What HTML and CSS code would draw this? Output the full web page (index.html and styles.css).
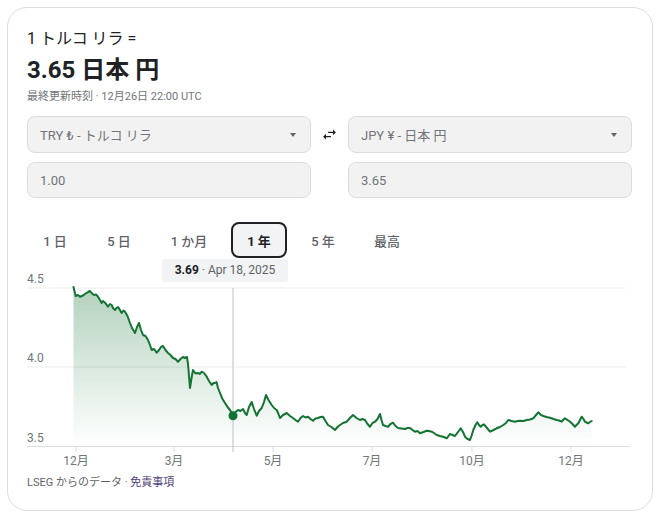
FILE: index.html
```html
<!DOCTYPE html>
<html lang="ja">
<head>
<meta charset="utf-8">
<link rel="stylesheet" href="styles.css">
</head>
<body>
<div class="card">
  <div class="title">1 トルコ リラ =</div>
  <div class="value">3.65 日本 円</div>
  <div class="updated">最終更新時刻 · 12月26日 22:00 UTC</div>

  <div class="converter">
    <div class="select"><span>TRY ₺ - トルコ リラ</span><span class="caret"></span></div>
    <div class="swap">
      <svg width="17" height="17" viewBox="0 0 24 24"><path d="M6.99 11L3 15l3.99 4v-3H14v-2H6.99v-3zM21 9l-3.99-4v3H10v2h7.01v3L21 9z" fill="#202124"/></svg>
    </div>
    <div class="select"><span>JPY ¥ - 日本 円</span><span class="caret"></span></div>
    <div class="input">1.00</div>
    <div></div>
    <div class="input">3.65</div>
  </div>

  <div class="tabs">
    <div class="tab">1 日</div>
    <div class="tab">5 日</div>
    <div class="tab wide">1 か月</div>
    <div class="tab active">1 年</div>
    <div class="tab">5 年</div>
    <div class="tab">最高</div>
  </div>

  <div class="chart">
    <div class="tooltip"><b>3.69</b> · Apr 18, 2025</div>
    <svg class="plot" width="605" height="200" viewBox="27 268 605 200">
      <defs>
        <linearGradient id="g" x1="0" y1="288" x2="0" y2="446" gradientUnits="userSpaceOnUse">
          <stop offset="0" stop-color="#137333" stop-opacity="0.32"/>
          <stop offset="1" stop-color="#137333" stop-opacity="0"/>
        </linearGradient>
      </defs>
      <line x1="27" y1="288" x2="625" y2="288" stroke="#ebebeb"/>
      <line x1="27" y1="367" x2="625" y2="367" stroke="#ebebeb"/>
      <line x1="27" y1="446.5" x2="630" y2="446.5" stroke="#dadce0"/>
      <g stroke="#dadce0">
        <line x1="76" y1="446" x2="76" y2="452"/>
        <line x1="174" y1="446" x2="174" y2="452"/>
        <line x1="273" y1="446" x2="273" y2="452"/>
        <line x1="372" y1="446" x2="372" y2="452"/>
        <line x1="472" y1="446" x2="472" y2="452"/>
        <line x1="571" y1="446" x2="571" y2="452"/>
      </g>
      <g class="ylab">
        <text x="27" y="282.5">4.5</text>
        <text x="27" y="361.5">4.0</text>
        <text x="27" y="441.5">3.5</text>
      </g>
      <path fill="url(#g)" d="M73.5,287 L75.7,296 L80,296.7 L85,294 L90,291 L94,295 L98,296.7 L101.7,303 L105,302.7 L108,306.7 L111.7,305 L115,310 L118,307 L121.7,313 L125,311.7 L130,323 L135,333 L139,323 L143,335 L148,340 L151.7,350 L156.7,352.7 L163,346 L168,353 L173,358 L178,361.7 L183,357 L187,357 L188,364 L190,388 L193,370 L198,373 L201.7,371.7 L206.7,376.7 L211.7,385 L215,383 L218,388 L220,393 L225,403 L230,410 L233,415.7 L238,410 L243,409 L246.7,415 L251.7,402 L256.7,415.7 L261.7,408 L266,395 L271.7,405 L276.7,410 L280,418 L286.7,413 L293,418 L298,421.7 L303,416 L308,416.7 L313,420.7 L318,418 L323,416.7 L328,425 L335,430 L340,425 L346.7,421.7 L353,415 L360,420 L365,420 L370,426.7 L375,421.7 L380,414 L383,425 L388,426.7 L393,422.7 L398,428 L405,429 L410,428 L415,431.7 L420,433.3 L426.7,430.7 L431.7,431.7 L436.7,435 L443,436.7 L446.7,438.3 L450,434 L455,436 L460.7,428.3 L465,436.7 L470,440 L473.3,430 L477.3,422.3 L480.7,426.7 L484,424.3 L490,431.7 L496.7,428.3 L503.3,425 L508.3,420 L515,421.7 L520,420.7 L526.7,420 L533.3,418.3 L538.3,412.3 L543.3,416 L550,417.7 L556.7,420 L561.7,421.7 L565,418.3 L570,421.7 L575,426.7 L578.3,423.3 L581.7,416.7 L585,421.7 L588.3,423.3 L591.7,421 L591.7,446 L73.5,446 Z"/>
      <line x1="233" y1="288" x2="233" y2="452" stroke="#bdc1c6"/>
      <path fill="none" stroke="#137333" stroke-width="2" stroke-linejoin="round" stroke-linecap="round" d="M73.5,287 L75.7,296 L78,295 L80,296.7 L83,295.5 L85,294 L88,292 L90,291 L92,293.5 L94,295 L96,294.5 L98,296.7 L100,300 L101.7,303 L103,301 L105,302.7 L106.5,304.5 L108,306.7 L110,304 L111.7,305 L113,308 L115,310 L116.5,308 L118,307 L120,310 L121.7,313 L123.5,310.5 L125,311.7 L127.5,316 L130,323 L132,328 L135,333 L137,327 L139,323 L141,330 L143,335 L145.5,336 L148,340 L150,345 L151.7,350 L154,349 L156.7,352.7 L159,350 L161,347 L163,346 L165.5,350 L168,353 L170.5,355 L173,358 L175.5,359 L178,361.7 L180.5,359 L183,357 L185,358 L187,357 L188,364 L190,388 L191.5,378 L193,370 L195.5,373.5 L198,373 L200,374 L201.7,371.7 L204,373 L206.7,376.7 L209,381 L211.7,385 L213.5,383 L215,383 L216.5,382 L218,388 L220,393 L222.5,399 L225,403 L227.5,407 L230,410 L233,415.7 L235.5,412 L238,410 L240.5,411 L243,409 L245,413 L246.7,415 L249,407 L251.7,402 L254,409 L256.7,415.7 L259,411 L261.7,408 L264,402 L266,395 L268.5,400 L271.7,405 L274,408 L276.7,410 L278.5,414 L280,418 L283,415 L286.7,413 L290,416 L293,418 L295.5,420 L298,421.7 L300.5,418 L303,416 L305.5,417.5 L308,416.7 L310.5,419 L313,420.7 L315.5,418.5 L318,418 L320.5,417 L323,416.7 L325.5,421 L328,425 L331.5,427 L335,430 L337.5,427 L340,425 L343,423 L346.7,421.7 L350,418 L353,415 L356.5,418 L360,420 L362.5,419 L365,420 L367.5,424 L370,426.7 L372.5,423 L375,421.7 L377.5,419 L380,414 L381.5,420 L383,425 L385.5,426 L388,426.7 L390.5,424 L393,422.7 L395.5,426 L398,428 L401.5,428.5 L405,429 L407.5,428 L410,428 L412.5,430 L415,431.7 L417.5,431 L420,433.3 L423.5,432 L426.7,430.7 L429,431 L431.7,431.7 L434,433 L436.7,435 L440,436 L443,436.7 L445,437.5 L446.7,438.3 L448.5,436 L450,434 L452.5,435 L455,436 L458,432 L460.7,428.3 L463,432 L465,436.7 L467.5,439 L470,440 L471.5,436 L473.3,430 L475.5,425 L477.3,422.3 L479,425 L480.7,426.7 L482.5,425 L484,424.3 L487,428 L490,431.7 L493.5,430 L496.7,428.3 L500,427 L503.3,425 L506,423 L508.3,420 L511.5,421 L515,421.7 L517.5,421 L520,420.7 L523.5,421 L526.7,420 L530,419.5 L533.3,418.3 L536,415 L538.3,412.3 L541,415 L543.3,416 L546.5,417 L550,417.7 L553.5,419 L556.7,420 L559,420.5 L561.7,421.7 L563.5,419.5 L565,418.3 L567.5,420 L570,421.7 L572.5,424 L575,426.7 L576.5,425 L578.3,423.3 L580,420 L581.7,416.7 L583.5,419 L585,421.7 L586.5,422.5 L588.3,423.3 L590,422 L591.7,421"/>
      <circle cx="233" cy="415.7" r="4.5" fill="#137333"/>
      <g class="xlab">
        <text x="76" y="464.5">12月</text>
        <text x="174" y="464.5">3月</text>
        <text x="273" y="464.5">5月</text>
        <text x="372" y="464.5">7月</text>
        <text x="472" y="464.5">10月</text>
        <text x="571" y="464.5">12月</text>
      </g>
    </svg>
  </div>

  <div class="footer">LSEG からのデータ · <span class="link">免責事項</span></div>
</div>
</body>
</html>
```
FILE: styles.css
```css
* { box-sizing: border-box; }
html, body { margin: 0; padding: 0; background: #fff; }
body {
  font-family: Roboto, "Noto Sans CJK JP", sans-serif;
  color: #202124;
}
.card {
  margin: 7px;
  width: 646px;
  height: 504px;
  border: 1px solid #dadce0;
  border-radius: 20px;
  padding: 20px 20px 0 19px;
}
.title {
  font-size: 16px;
  line-height: 22px;
  color: #202124;
}
.value {
  margin-top: 4px;
  font-size: 24px;
  line-height: 32px;
  font-weight: 700;
  color: #202124;
}
.updated {
  margin-top: 3px;
  font-size: 11px;
  line-height: 16px;
  color: #70757a;
}
.converter {
  margin-top: 11px;
  display: grid;
  grid-template-columns: 284px 37px 284px;
  grid-template-rows: 37px 36px;
  row-gap: 9px;
}
.select, .input {
  background: #f2f2f2;
  border: 1px solid #dadce0;
  border-radius: 8px;
  padding: 0 12px 0 12px;
  font-size: 13px;
  color: #70757a;
  display: flex;
  align-items: center;
}
.select { justify-content: space-between; padding-right: 14px; }
.caret {
  width: 0; height: 0;
  border-left: 3.5px solid transparent;
  border-right: 3.5px solid transparent;
  border-top: 4px solid #5f6368;
}
.swap {
  display: flex;
  align-items: center;
  justify-content: center;
}
.swap svg { display: block; }
.tabs {
  margin-top: 24px;
  display: flex;
  gap: 8px;
  height: 36px;
}
.tab {
  width: 56px;
  flex: none;
  display: flex;
  align-items: center;
  justify-content: center;
  font-size: 13px;
  font-weight: 500;
  color: #5f6368;
  border-radius: 8px;
  border: 2px solid transparent;
  white-space: nowrap;
}
.tab.wide { width: 68px; }
.tab.active {
  border-color: #202124;
  background: #f1f3f4;
  color: #202124;
  font-weight: 700;
}
.chart {
  position: relative;
  margin-top: 10px;
  height: 200px;
}
.plot { display: block; }
.tooltip {
  position: absolute;
  left: 135px;
  top: -9px;
  width: 126px;
  height: 23px;
  background: #f1f3f4;
  border-radius: 3px;
  font-size: 12px;
  line-height: 23px;
  text-align: center;
  color: #5f6368;
}
.tooltip b { color: #202124; font-weight: 700; }
.ylab text {
  font-size: 12px;
  fill: #70757a;
  font-family: Roboto, sans-serif;
}
.xlab text {
  font-size: 12px;
  fill: #70757a;
  text-anchor: middle;
  font-family: Roboto, "Noto Sans CJK JP", sans-serif;
}
.footer {
  margin-top: 7px;
  font-size: 11px;
  line-height: 16px;
  color: #5f6368;
}
.link { color: #52407a; }
```
